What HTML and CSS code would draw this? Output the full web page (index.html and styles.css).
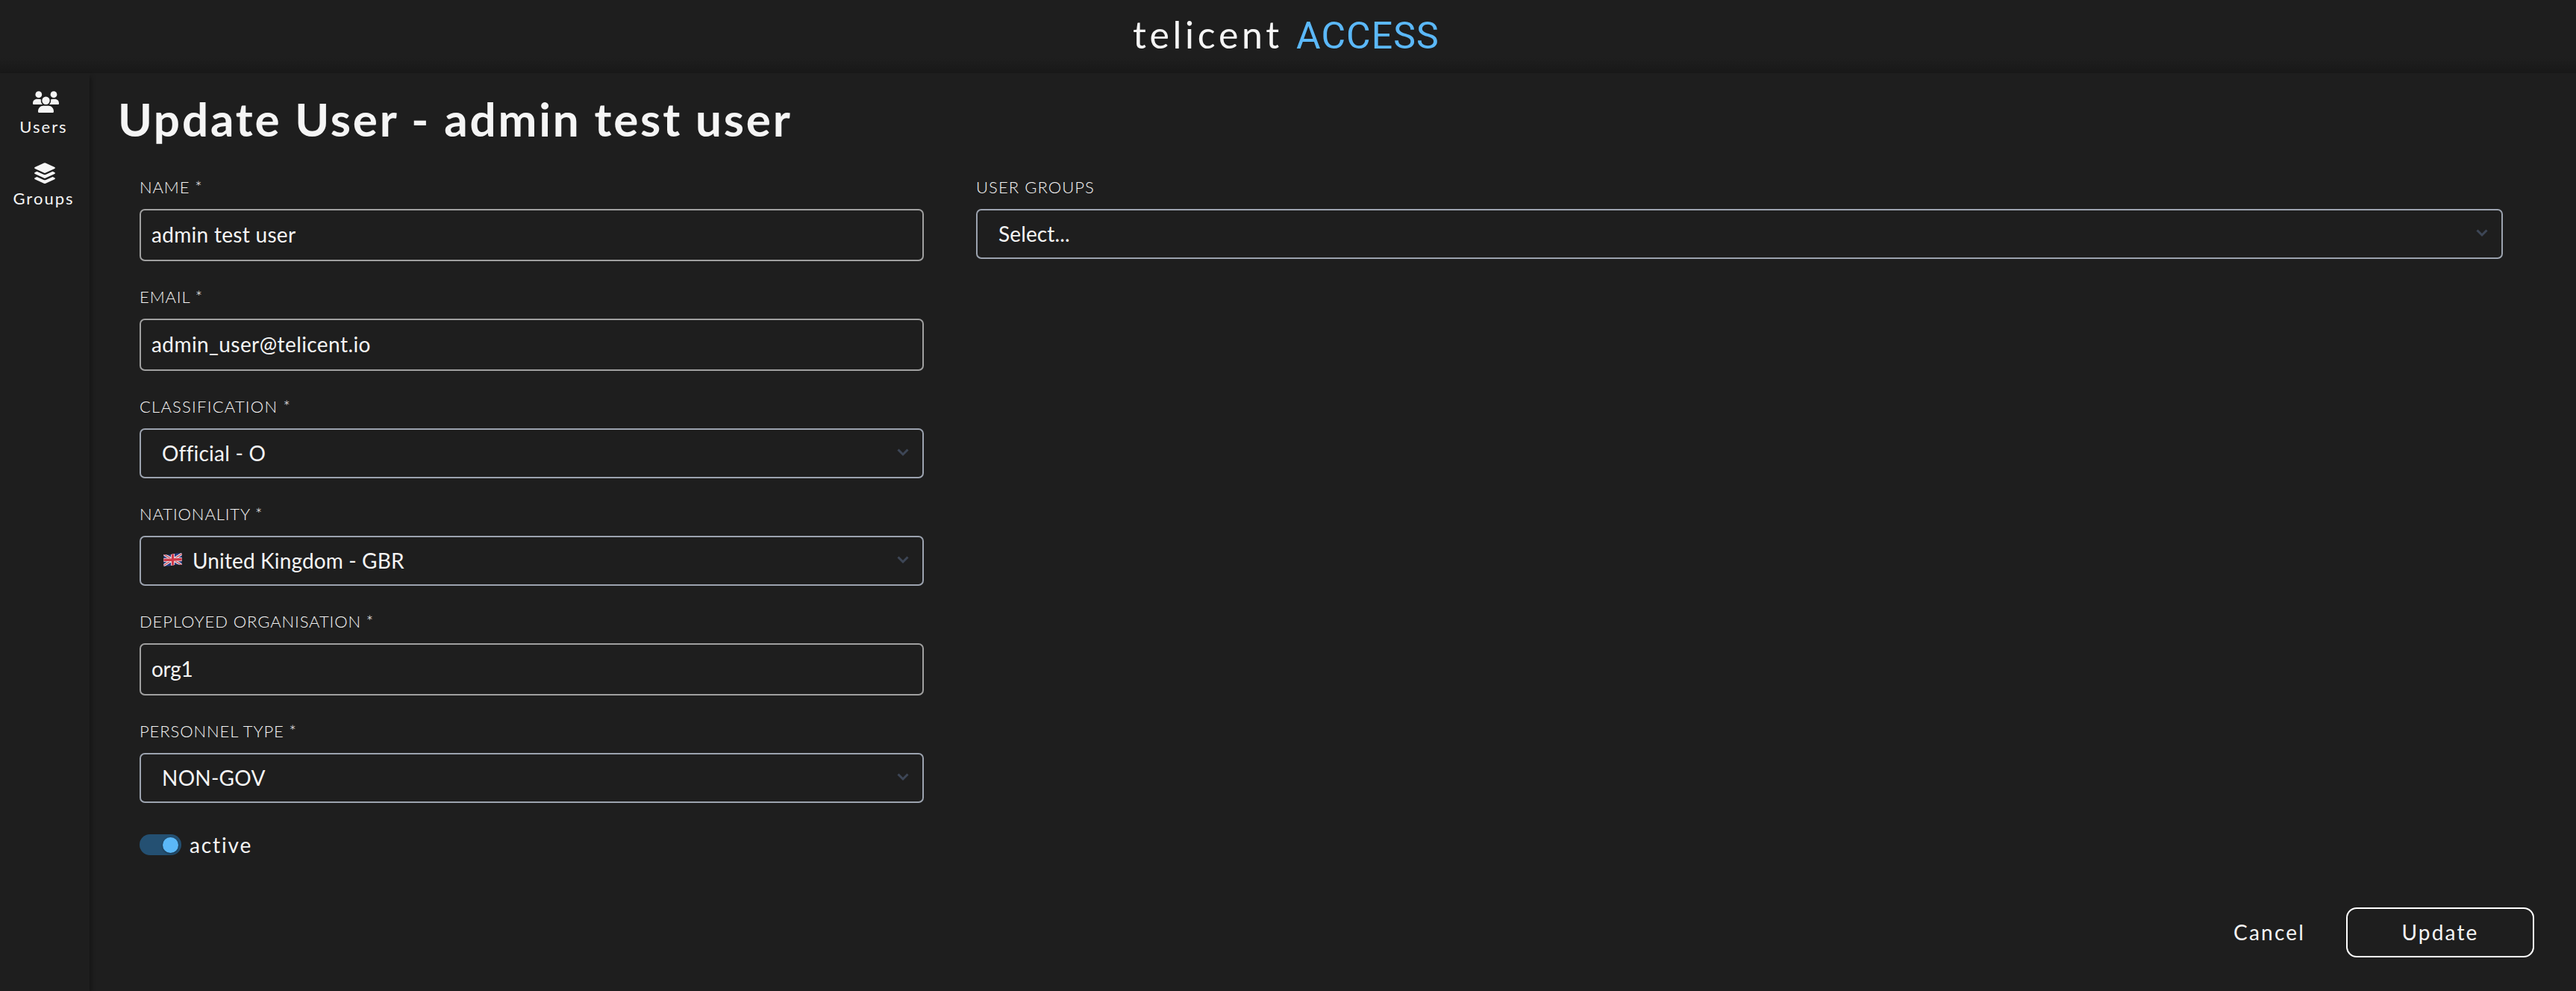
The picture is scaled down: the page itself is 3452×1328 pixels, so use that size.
FILE: index.html
```
<!DOCTYPE html>
<html lang="en">
<head>
<meta charset="utf-8">
<title>Telicent Access</title>
<link rel="stylesheet" href="styles.css">
</head>
<body>
<header class="header">
  <div class="logo"><span class="brand">telicent</span><span class="product">ACCESS</span></div>
</header>
<div class="shell">
  <nav class="sidebar">
    <a class="nav-item users">
      <svg width="35" height="29" viewBox="0 0 35 29" fill="currentColor"><circle cx="7.8" cy="4.7" r="4.4"/><circle cx="28" cy="4.7" r="4.4"/><circle cx="17.5" cy="12.7" r="5.2"/><path d="M0 16.5C0 13 2.3 10.8 5.5 10.8h3c.9 0 1.700.2 2.400.5-.4 2.700.3 5 2 6.700H1Q0 18 0 17zM35 16.500c0-3.500-2.300-5.700-5.500-5.700h-3c-.9 0-1.700.2-2.400.5.4 2.700-.3 5-2 6.700H34q1 0 1-1zM7 27.500c0-4.500 3-7.700 7-7.700h7c4 0 7 3.200 7 7.700q0 1.500-1.400 1.500H8.400Q7 29 7 27.500z"/></svg>
      <span>Users</span>
    </a>
    <a class="nav-item groups">
      <svg width="28" height="29" viewBox="0 0 28 29" fill="currentColor"><path d="M12.800.5q1.200-.6 2.400 0L27.200 6q1.400 1 0 2L15.200 13.600q-1.200.6-2.400 0L.8 8q-1.400-1 0-2z"/><path id="layer" d="M3.500 11.700 12.300 15.800q1.700.7 3.400 0L24.500 11.700 27.200 13q1.400 1 0 2L15.200 20.600q-1.200.6-2.400 0L.8 15q-1.400-1 0-2z"/><use href="#layer" y="7.2"/></svg>
      <span>Groups</span>
    </a>
  </nav>
  <main class="main">
    <h1 class="title">Update User - admin test user</h1>
    <form class="form">
      <div class="column">
        <div class="field name"><label class="label">NAME *</label><div class="input">admin test user</div></div>
        <div class="field email"><label class="label">EMAIL *</label><div class="input">admin_user@telicent.io</div></div>
        <div class="field classification"><label class="label">CLASSIFICATION *</label><div class="select"><span>Official - O</span><svg class="chevron" viewBox="0 0 16 11"><path d="M1.500 1.500 8 8l6.500-6.500"/></svg></div></div>
        <div class="field nationality"><label class="label">NATIONALITY *</label><div class="select">
          <svg class="flag" viewBox="0 0 25 18"><clipPath id="cloth"><path d="M.3 2Q6.500 3 12.500 1.500T24.700.3V16Q18.500 15 12.500 16.500T.3 17.700z"/></clipPath><g clip-path="url(#cloth)"><path fill="#273b83" d="M0 0h25v18H0z"/><path stroke="#eee" stroke-width="3.400" d="M0 1.500 25 16.500M0 17 25 1"/><path stroke="#c8394a" stroke-width="1.200" d="M0 1.500 25 16.500M0 17 25 1"/><path stroke="#eee" stroke-width="5" d="M12.500 0v18M0 9.500 25 8.500"/><path stroke="#cf3a4a" stroke-width="3.400" d="M12.500 0v18M0 9.500 25 8.500"/></g></svg>
          <span>United Kingdom - GBR</span><svg class="chevron" viewBox="0 0 16 11"><path d="M1.500 1.500 8 8l6.500-6.500"/></svg></div></div>
        <div class="field organisation"><label class="label">DEPLOYED ORGANISATION *</label><div class="input">org1</div></div>
        <div class="field personnel"><label class="label">PERSONNEL TYPE *</label><div class="select"><span>NON-GOV</span><svg class="chevron" viewBox="0 0 16 11"><path d="M1.500 1.500 8 8l6.500-6.500"/></svg></div></div>
        <div class="toggle-row"><span class="toggle"><span class="knob"></span></span><span class="toggle-label">active</span></div>
      </div>
      <div class="column">
        <div class="field user-groups"><label class="label">USER GROUPS</label><div class="select"><span>Select...</span><svg class="chevron" viewBox="0 0 16 11"><path d="M1.500 1.500 8 8l6.500-6.500"/></svg></div></div>
      </div>
    </form>
    <footer class="actions"><button class="button cancel">Cancel</button><button class="button update">Update</button></footer>
  </main>
</div>
</body>
</html>
```
FILE: styles.css
```
* { box-sizing: border-box; }
body {
  margin: 0;
  height: 1328px;
  display: flex;
  flex-direction: column;
  overflow: hidden;
  background: #1e1e1e;
  color: #f5f5f5;
  font: 28px/34px Lato, "Liberation Sans", sans-serif;
}
svg { display: block; flex: none; }

.header {
  height: 98px;
  padding-top: 17px;
  background: linear-gradient(#1e1e1e 78px, #181818 98px);
}
.logo {
  display: flex;
  align-items: baseline;
  padding-left: 1518px;
  line-height: 58px;
}
.brand { width: 219px; font-size: 50px; letter-spacing: 4.700px; }
.product { color: #5bb8f8; font: 50px/58px Roboto, sans-serif; letter-spacing: 1.100px; }

.shell { flex: 1; display: grid; grid-template-columns: 120px 1fr; }
.sidebar {
  display: flex;
  flex-direction: column;
  gap: 35px;
  padding-top: 24px;
  box-shadow: 3px 4px 6px -1px rgba(0, 0, 0, .35);
}
.nav-item {
  display: flex;
  flex-direction: column;
  align-items: center;
  gap: 6px;
  padding-right: 5px;
  font-size: 22px;
  line-height: 26px;
  letter-spacing: 2px;
}
.nav-item span { margin-right: -2px; }
.users svg { margin-left: 8px; }
.groups svg { margin-left: 5px; }

.main { display: flex; flex-direction: column; padding: 24px 56px 45px 38px; }
.title { margin: 0; font-size: 62px; line-height: 74px; font-weight: 700; letter-spacing: 2.830px; }
.form {
  display: grid;
  grid-template-columns: 1051px 2046px;
  column-gap: 70px;
  padding: 42px 0 0 29px;
}
.column { display: flex; flex-direction: column; gap: 35px; }
.field { display: flex; flex-direction: column; gap: 16px; }
.label { font-size: 22px; line-height: 26px; font-weight: 300; letter-spacing: .9px; }
.classification .label { letter-spacing: 1.230px; }
.user-groups .label { letter-spacing: 1.060px; }
.input, .select {
  display: flex;
  align-items: center;
  border: 2px solid #a0a0a0;
  border-radius: 7px;
  padding-bottom: 2px;
}
.input { height: 70px; padding-left: 14px; letter-spacing: .3px; }
.email .input { letter-spacing: .420px; }
.organisation .input { letter-spacing: -.3px; }
.select { height: 67px; padding-left: 28px; padding-right: 18px; border-color: #9ca3af; letter-spacing: .140px; }
.classification .select { letter-spacing: .220px; }
.personnel .select { letter-spacing: .250px; }
.chevron { width: 16px; height: 11px; margin-left: auto; fill: none; stroke: #3d4656; stroke-width: 3; }
.flag { width: 25px; height: 18px; margin: 0 14px 2px 2px; }

.toggle-row { display: flex; align-items: center; gap: 11px; margin-top: 7px; height: 28px; }
.toggle { display: flex; align-items: center; justify-content: flex-end; width: 56px; height: 28px; padding-right: 4px; border-radius: 14px; background: #245072; }
.knob { width: 21px; height: 21px; border-radius: 50%; background: #5bb8f8; box-shadow: 0 1px 3px rgba(0, 0, 0, .4); }
.toggle-label { letter-spacing: 1.880px; }

.actions { display: flex; justify-content: flex-end; gap: 55px; margin-top: auto; }
.button { height: 67px; padding: 0 0 1px; border: 0; background: none; color: inherit; font: inherit; letter-spacing: 2.200px; }
.update { width: 252px; border: 2px solid #fff; border-radius: 14px; }
```
